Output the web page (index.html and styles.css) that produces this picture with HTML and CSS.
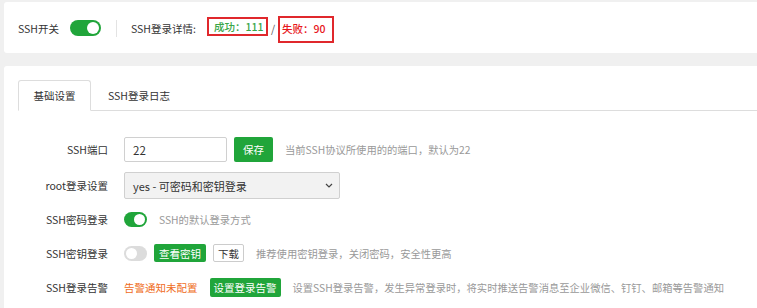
FILE: index.html
```html
<!DOCTYPE html>
<html lang="zh-CN">
<head>
<meta charset="utf-8">
<title>SSH管理</title>
<link rel="stylesheet" href="styles.css">
</head>
<body>
<div class="top">
  <span class="top-label">SSH开关</span>
  <span class="switch switch-lg"></span>
  <span class="divider"></span>
  <span class="detail-label">SSH登录详情:</span>
  <span class="mark mark-ok">成功：111</span>
  <span class="slash">/</span>
  <span class="mark mark-fail">失败：90</span>
</div>
<div class="main">
  <div class="tabs">
    <div class="tab active">基础设置</div>
    <div class="tab">SSH登录日志</div>
  </div>
  <div class="form">
    <div class="row row-port">
      <div class="label">SSH端口</div>
      <div class="ctrl">
        <div class="input">22</div>
        <span class="btn btn-save">保存</span>
        <span class="hint">当前SSH协议所使用的的端口，默认为22</span>
      </div>
    </div>
    <div class="row row-root">
      <div class="label">root登录设置</div>
      <div class="ctrl">
        <div class="select">
          <span>yes - 可密码和密钥登录</span>
          <svg class="chev" width="8" height="5" viewBox="0 0 8 5"><path d="M1 1 L4 4 L7 1" fill="none" stroke="#444" stroke-width="1.2"/></svg>
        </div>
      </div>
    </div>
    <div class="row row-pwd">
      <div class="label">SSH密码登录</div>
      <div class="ctrl">
        <span class="switch"></span>
        <span class="hint">SSH的默认登录方式</span>
      </div>
    </div>
    <div class="row row-key">
      <div class="label">SSH密钥登录</div>
      <div class="ctrl">
        <span class="switch off"></span>
        <span class="btn btn-view">查看密钥</span>
        <span class="btn-plain">下载</span>
        <span class="hint">推荐使用密钥登录，关闭密码，安全性更高</span>
      </div>
    </div>
    <div class="row row-alarm">
      <div class="label">SSH登录告警</div>
      <div class="ctrl">
        <span class="warn">告警通知未配置</span>
        <span class="btn btn-alarm">设置登录告警</span>
        <span class="hint">设置SSH登录告警，发生异常登录时，将实时推送告警消息至企业微信、钉钉、邮箱等告警通知</span>
      </div>
    </div>
  </div>
</div>
</body>
</html>
```

FILE: styles.css
```css
* { box-sizing: border-box; }
html, body { height: 100%; }
body {
  margin: 0;
  background: #f0f0f0;
  font-family: "Noto Sans CJK SC", "Noto Sans", sans-serif;
  font-size: 10.5px;
  color: #333;
  overflow: hidden;
}
.top {
  margin: 2px 0 0 4px;
  height: 51px;
  background: #fff;
  display: flex;
  align-items: center;
  padding-left: 14px;
  padding-top: 2px;
  border-radius: 3px 0 0 3px;
  white-space: nowrap;
}
.top-label { color: #333; }
.switch {
  position: relative;
  display: inline-block;
  width: 23px;
  height: 15px;
  border-radius: 8px;
  background: #20a53a;
  flex: none;
}
.switch::after {
  content: "";
  position: absolute;
  top: 2px;
  right: 2px;
  width: 11px;
  height: 11px;
  border-radius: 50%;
  background: #fff;
}
.switch.off { background: #dcdcdc; }
.switch.off::after { right: auto; left: 2px; }
.switch-lg {
  width: 31px;
  height: 16px;
  margin-left: 11px;
  margin-top: -2px;
}
.switch-lg::after { width: 12px; height: 12px; }
.divider {
  width: 1px;
  height: 17px;
  background: #e3e3e3;
  margin: 0 14px 0 15px;
}
.detail-label { color: #333; margin-right: 11px; }
.mark {
  display: inline-flex;
  align-items: center;
  border: 2px solid #e0282c;
  white-space: nowrap;
  flex: none;
  font-weight: 500;
}
.mark-ok {
  width: 61px;
  height: 19px;
  padding-left: 5px;
  color: #3aa64a;
  margin-top: -4px;
}
.mark-fail {
  width: 56px;
  height: 27px;
  padding-left: 2px;
  color: #e8161b;
  margin-top: 1px;
  padding-bottom: 1px;
}
.slash { margin: 0 3px 0 3px; color: #555; }

.main {
  margin: 13px 0 0 4px;
  background: #fff;
  padding: 14px 0 0 14px;
  height: 242px;
  border-radius: 3px 0 0 0;
}
.tabs {
  display: flex;
  height: 31px;
  border-bottom: 1px solid #ddd;
}
.tab {
  height: 30px;
  display: flex;
  align-items: center;
  padding: 0 17px;
  color: #333;
}
.tab.active {
  width: 73px;
  justify-content: center;
  padding: 0;
  height: 31px;
  border: 1px solid #ddd;
  border-bottom-color: #fff;
  border-radius: 3px 3px 0 0;
  background: #fff;
}
.form {
  padding-top: 26px;
  display: flex;
  flex-direction: column;
  gap: 10px;
}
.row {
  display: grid;
  grid-template-columns: 90px auto;
  column-gap: 16px;
  align-items: center;
}
.row-port { height: 25px; }
.row-root { height: 27px; }
.row-pwd { height: 20px; }
.row-key { height: 28px; }
.row-alarm { height: 20px; }
.label { text-align: right; color: #333; white-space: nowrap; }
.ctrl {
  display: flex;
  align-items: center;
  height: 100%;
}
.input {
  width: 103px;
  height: 25px;
  border: 1px solid #d0d0d0;
  border-radius: 2px;
  padding-left: 8px;
  display: flex;
  align-items: center;
  font-size: 11.5px;
  color: #333;
}
.btn {
  display: inline-flex;
  align-items: center;
  justify-content: center;
  background: #20a53a;
  color: #fff;
  border-radius: 2px;
  flex: none;
  white-space: nowrap;
}
.btn-save { width: 39px; height: 25px; margin-left: 7px; }
.btn-view { width: 52px; height: 18px; margin-left: 7px; }
.btn-alarm { width: 71px; height: 19px; margin-left: 12px; }
.btn-plain {
  display: inline-flex;
  align-items: center;
  justify-content: center;
  width: 31px;
  height: 18px;
  border: 1px solid #ccc;
  border-radius: 2px;
  margin-left: 7px;
  color: #333;
  flex: none;
}
.hint { color: #999; margin-left: 12px; white-space: nowrap; font-size: 10.3px; }
.select {
  width: 216px;
  height: 27px;
  background: #f2f2f2;
  border: 1px solid #d0d0d0;
  border-radius: 2px;
  display: flex;
  align-items: center;
  justify-content: space-between;
  padding: 0 6px 0 8px;
  font-size: 11px;
  color: #333;
}
.chev { flex: none; }
.warn { color: #ef6c22; white-space: nowrap; }
```
